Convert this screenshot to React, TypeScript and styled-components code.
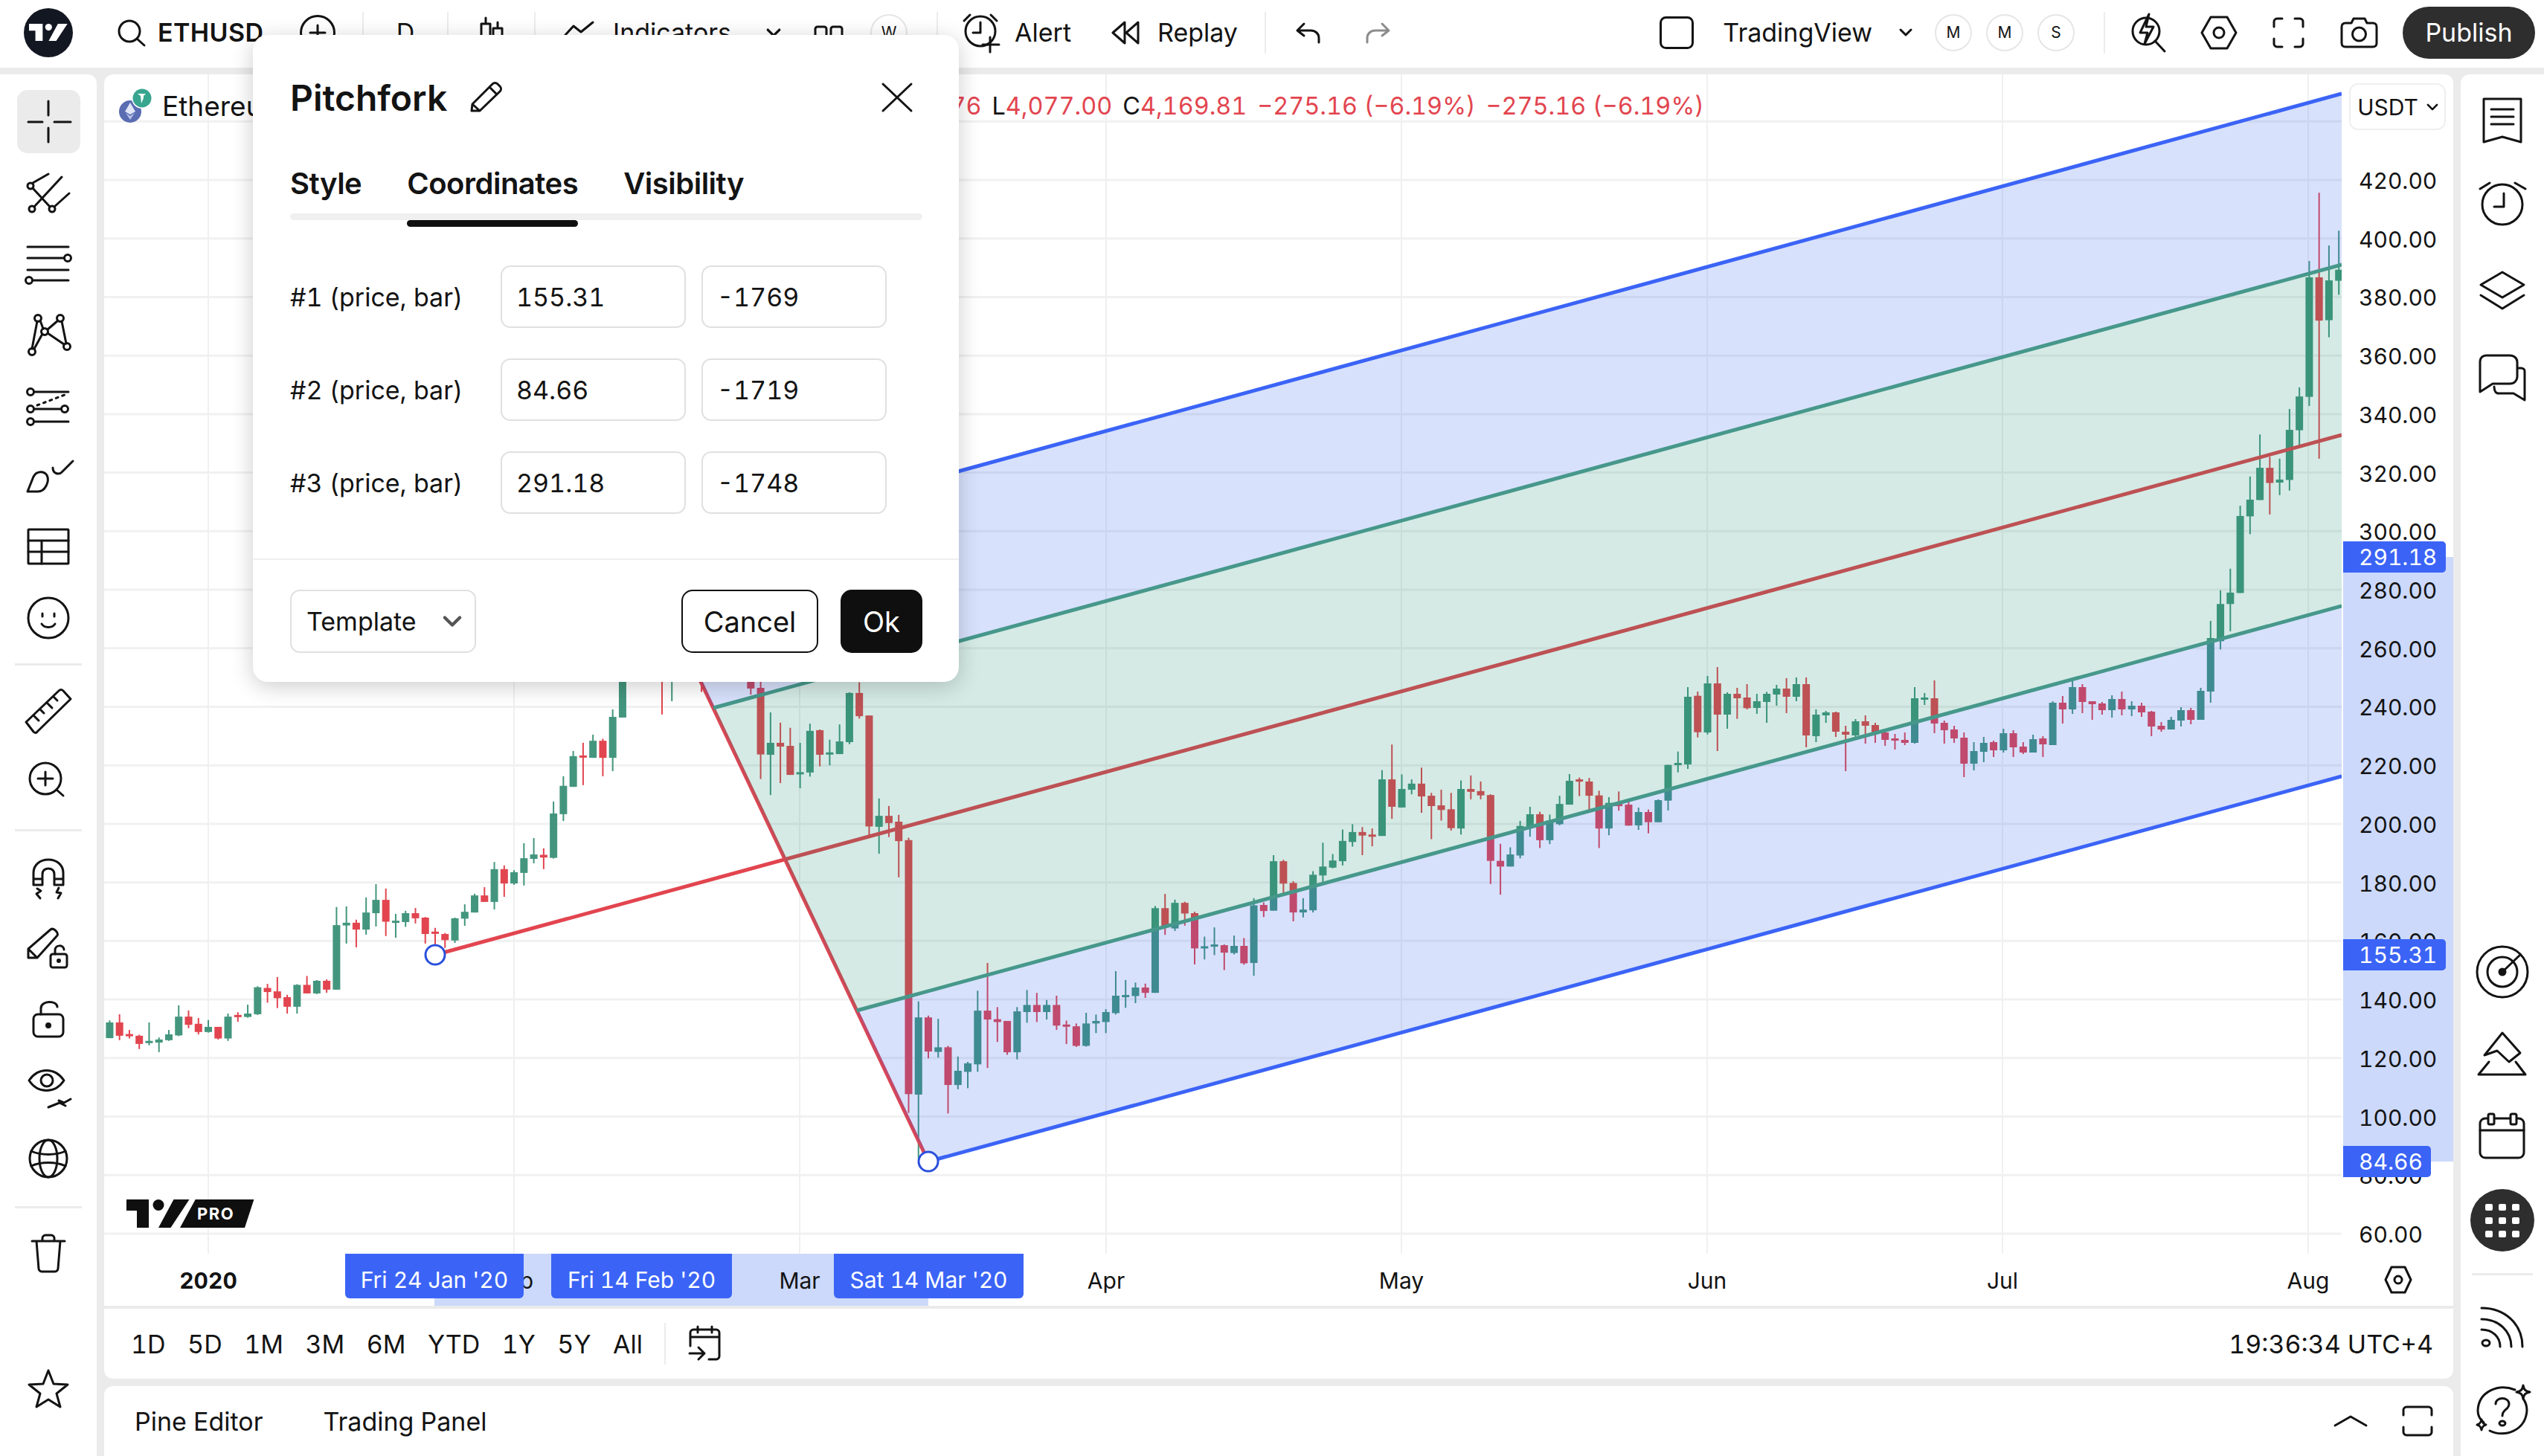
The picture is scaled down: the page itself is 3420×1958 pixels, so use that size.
import * as React from 'react';
import styled, { createGlobalStyle } from 'styled-components';

const GlobalStyle = createGlobalStyle`
  html, body {
    margin: 0;
    padding: 0;
    background: #ebebeb;
    font-family: Inter, "Liberation Sans", sans-serif;
    font-variant-numeric: tabular-nums;
    color: #131313;
  }
  * { box-sizing: border-box; }
`

const Page = styled.div`
  width: 3420px;
  height: 1958px;
  position: relative;
  overflow: hidden;
  display: flex;
  flex-direction: column;
  background: #ebebeb;
`

const Ico = styled.svg`
  display: block;
  flex: none;
  overflow: visible;
  fill: none;
  stroke: ${p => p.color || '#131313'};
  stroke-width: 3;
  stroke-linecap: round;
  stroke-linejoin: round;
`

/* ---------- top bar ---------- */

const TopBar = styled.div`
  height: 91px;
  flex: none;
  background: #fff;
  display: flex;
  align-items: center;
  padding-bottom: 4px;
  margin-bottom: 9px;
  font-size: 34px;
`

const Cell = styled.div<{ $w?: number; $ml?: number }>`
  display: flex;
  align-items: center;
  justify-content: center;
  flex: none;
  height: 64px;
  width: ${p => (p.$w ? p.$w + 'px' : 'auto')};
  margin-left: ${p => p.$ml || 0}px;
`

const TextTool = styled.div<{ $ml?: number; $gap?: number }>`
  display: flex;
  align-items: center;
  flex: none;
  gap: ${p => p.$gap || 18}px;
  margin-left: ${p => p.$ml || 0}px;
  white-space: nowrap;
`

const LogoCircle = styled.div`
  width: 66px;
  height: 66px;
  border-radius: 50%;
  background: #131722;
  display: flex;
  align-items: center;
  justify-content: center;
`

const Symbol = styled.span`
  font-weight: 600;
  letter-spacing: 0.4px;
`

const Sep = styled.div<{ $ml?: number }>`
  width: 2px;
  height: 56px;
  background: #ececec;
  flex: none;
  margin-left: ${p => p.$ml || 0}px;
`

const Pill = styled.div<{ $ml?: number }>`
  width: 50px;
  height: 50px;
  border-radius: 50%;
  border: 2px solid #e6e6e6;
  display: flex;
  align-items: center;
  justify-content: center;
  font-size: 21px;
  flex: none;
  margin-left: ${p => p.$ml || 0}px;
`

const RightTools = styled.div`
  margin-left: auto;
  display: flex;
  align-items: center;
  padding-right: 12px;
`

const Publish = styled.div`
  margin-left: 33px;
  width: 178px;
  height: 70px;
  border-radius: 35px;
  background: #2e2e2e;
  color: #fff;
  display: flex;
  align-items: center;
  justify-content: center;
`

/* ---------- layout ---------- */

const Workspace = styled.div`
  flex: 1;
  display: flex;
  gap: 10px;
  min-height: 0;
`

const LeftBar = styled.div`
  width: 130px;
  flex: none;
  background: #fff;
  border-top-right-radius: 12px;
  display: flex;
  flex-direction: column;
  align-items: center;
  padding-top: 21px;
`

const ToolSlot = styled.div<{ $h?: number; $mt?: number; $active?: boolean }>`
  width: 85px;
  height: ${p => p.$h || 95}px;
  margin-top: ${p => p.$mt || 0}px;
  flex: none;
  display: flex;
  align-items: center;
  justify-content: center;
  border-radius: 14px;
  background: ${p => (p.$active ? '#ebebeb' : 'transparent')};
`

const BarRule = styled.div<{ $mt?: number; $mb?: number; $w?: number }>`
  width: ${p => p.$w || 90}px;
  height: 3px;
  background: #ebebeb;
  flex: none;
  margin-top: ${p => p.$mt || 0}px;
  margin-bottom: ${p => p.$mb || 0}px;
`

const Center = styled.div`
  width: 3158px;
  flex: none;
  display: flex;
  flex-direction: column;
  gap: 10px;
`

const ChartCard = styled.div`
  height: 1754px;
  flex: none;
  background: #fff;
  border-radius: 12px;
  overflow: hidden;
  display: flex;
  flex-direction: column;
`

const PlotRow = styled.div`
  height: 1586px;
  flex: none;
  display: flex;
`

const Plot = styled.div`
  width: 3008px;
  height: 1586px;
  flex: none;
  position: relative;
`

const ChartSvg = styled.svg`
  display: block;
`

const Legend = styled.div`
  position: absolute;
  left: 20px;
  top: 18px;
  height: 48px;
  display: flex;
  align-items: center;
  white-space: nowrap;
  font-size: 32.4px;
`

const LegendTitle = styled.span`
  font-size: 37px;
  margin-left: 12px;
  width: 934px;
  overflow: hidden;
`

const Red = styled.span`
  color: #e2454f;
`

const Ohlc = styled.span`
  margin-right: 14px;
`

const ProBadge = styled.svg`
  position: absolute;
  left: 30px;
  bottom: 35px;
  overflow: visible;
`

const PriceScale = styled.div`
  width: 150px;
  flex: none;
  position: relative;
  font-size: 30px;
`

const ScaleBand = styled.div`
  position: absolute;
  left: 2px;
  right: 0;
  background: #ccd9fb;
`

const Tick = styled.div`
  position: absolute;
  left: 23px;
  margin-top: 1px;
  transform: translateY(-50%);
  line-height: 36px;
`

const PriceFlag = styled.div<{ $w: number }>`
  position: absolute;
  left: 2px;
  width: ${p => p.$w}px;
  height: 42px;
  transform: translateY(-50%);
  background: #3b64f6;
  color: #fff;
  border-radius: 0 5px 5px 0;
  line-height: 42px;
  padding-left: 21px;
`

const CurrencyButton = styled.div`
  position: absolute;
  top: 12px;
  left: 10px;
  width: 130px;
  height: 63px;
  border: 2px solid #efefef;
  border-radius: 12px;
  display: flex;
  align-items: center;
  justify-content: center;
  gap: 12px;
  background: #fff;
`

const TimeAxis = styled.div`
  height: 70px;
  flex: none;
  position: relative;
  font-size: 30px;
`

const TimeBand = styled.div`
  position: absolute;
  left: 444px;
  width: 664px;
  top: 0;
  bottom: 0;
  background: #ccd9fb;
`

const TimeLabel = styled.div<{ $bold?: boolean }>`
  position: absolute;
  top: 36px;
  transform: translate(-50%, -50%);
  font-weight: ${p => (p.$bold ? 700 : 400)};
  white-space: nowrap;
`

const TimeFlag = styled.div`
  position: absolute;
  top: 0;
  height: 60px;
  padding-top: 10px;
  background: #3b64f6;
  color: #fff;
  border-radius: 0 0 6px 6px;
  display: flex;
  align-items: center;
  justify-content: center;
  white-space: nowrap;
`

const HexSlot = styled.div`
  position: absolute;
  left: 3066px;
  top: 16px;
`

const RangeBar = styled.div`
  height: 98px;
  flex: none;
  border-top: 4px solid #ebebeb;
  display: flex;
  align-items: center;
  padding-left: 36px;
  padding-right: 27px;
  gap: 29.5px;
  font-size: 34px;
`

const RangeSep = styled.div`
  width: 2px;
  height: 56px;
  background: #ececec;
`

const Clock = styled.div`
  margin-left: auto;
`

const BottomPanel = styled.div`
  flex: 1;
  background: #fff;
  border-radius: 12px 12px 0 0;
  display: flex;
  align-items: center;
  padding: 0 28px 0 41px;
  font-size: 34px;
  gap: 81px;
`

const PanelIcons = styled.div`
  margin-left: auto;
  display: flex;
  align-items: center;
  gap: 48px;
`

const RightBar = styled.div`
  flex: 1;
  background: #fff;
  border-top-left-radius: 12px;
  display: flex;
  flex-direction: column;
  align-items: center;
  padding-top: 5px;
`

const RightSlot = styled.div<{ $h?: number }>`
  height: ${p => p.$h || 115}px;
  display: flex;
  align-items: center;
  justify-content: center;
  flex: none;
`

const RightBottom = styled.div`
  margin-top: auto;
  display: flex;
  flex-direction: column;
  align-items: center;
  padding-bottom: 5px;
`

const Launcher = styled.div`
  width: 86px;
  height: 84px;
  border-radius: 50%;
  background: #2e2e2e;
  display: grid;
  grid-template-columns: repeat(3, 10px);
  grid-auto-rows: 9px;
  gap: 9px 8px;
  justify-content: center;
  align-content: center;
`

const LauncherDot = styled.span`
  background: #fff;
  border-radius: 2px;
`

/* ---------- dialog ---------- */

const Dialog = styled.div`
  position: absolute;
  left: 340px;
  top: 47px;
  width: 949px;
  height: 870px;
  background: #fff;
  border-radius: 20px;
  box-shadow: 0 6px 30px rgba(0, 0, 0, 0.2);
  padding: 50px 49px 0 50px;
  display: flex;
  flex-direction: column;
`

const DialogHead = styled.div`
  height: 68px;
  display: flex;
  align-items: center;
  flex: none;
  margin-bottom: 2px;
`

const DialogTitle = styled.div`
  font-size: 48px;
  font-weight: 600;
  margin-right: 31px;
`

const CloseSlot = styled.div`
  margin-left: auto;
  margin-right: 14px;
`

const Tabs = styled.div`
  position: relative;
  margin-top: 40px;
  height: 89px;
  display: flex;
  gap: 61px;
  flex: none;
  &::after {
    content: '';
    position: absolute;
    left: 0;
    right: 0;
    bottom: 0;
    height: 9px;
    border-radius: 5px;
    background: #f0f0f0;
  }
`

const Tab = styled.div<{ $active?: boolean }>`
  position: relative;
  z-index: 1;
  font-size: 40px;
  font-weight: 600;
  line-height: 80px;
  letter-spacing: -0.5px;
  white-space: nowrap;
  &::after {
    content: '';
    display: ${p => (p.$active ? 'block' : 'none')};
    position: absolute;
    left: 0;
    right: 0;
    bottom: -9px;
    height: 9px;
    border-radius: 5px;
    background: #0f0f0f;
  }
`

const Form = styled.div`
  margin-top: 61px;
  display: flex;
  flex-direction: column;
  gap: 41px;
  flex: none;
`

const FormRow = styled.div`
  display: flex;
  align-items: center;
  height: 84px;
  font-size: 34px;
`

const RowLabel = styled.div`
  width: 283px;
  flex: none;
`

const Field = styled.div`
  width: 249px;
  height: 84px;
  border: 2px solid #e0e0e0;
  border-radius: 13px;
  display: flex;
  align-items: center;
  padding-left: 19px;
  margin-right: 21px;
  font-size: 34px;
`

const DialogFoot = styled.div`
  margin: 60px -49px 0 -50px;
  border-top: 2px solid #efefef;
  padding: 40px 49px 0 50px;
  display: flex;
  align-items: center;
  flex: none;
`

const TemplateSelect = styled.div`
  width: 250px;
  height: 85px;
  border: 2px solid #e0e0e0;
  border-radius: 13px;
  display: flex;
  align-items: center;
  justify-content: space-between;
  padding: 0 18px 0 20px;
  font-size: 34px;
`

const CancelButton = styled.div`
  margin-left: auto;
  width: 184px;
  height: 85px;
  border: 2px solid #0f0f0f;
  border-radius: 15px;
  display: flex;
  align-items: center;
  justify-content: center;
  font-size: 38px;
`

const OkButton = styled.div`
  margin-left: 30px;
  width: 110px;
  height: 85px;
  background: #0f0f0f;
  color: #fff;
  border-radius: 15px;
  display: flex;
  align-items: center;
  justify-content: center;
  font-size: 38px;
`

/* ---------- chart data ---------- */

const priceY = (p: number) => 242 + (420 - p) * 3.936
const barX = (i: number) => 585 + i * 13.26

// [body top, body bottom, wick top, wick bottom, 1 = up]
type Row = [number, number, number, number, number]
type Bar = { i: number; top: number; bottom: number; hi: number; lo: number; up: boolean }

const frame = (start: number, y0: number, scale: number, rows: Row[]): Bar[] =>
  rows.map((r, k) => ({
    i: start + k,
    top: y0 + r[0] / scale,
    bottom: y0 + r[1] / scale,
    hi: y0 + r[2] / scale,
    lo: y0 + r[3] / scale,
    up: r[4] === 1,
  }))

const bars: Bar[] = [
  ...frame(-33, 880, 2.178, [
    [1078, 1124, 1072, 1124, 1], [1078, 1117, 1054, 1130, 0], [1112, 1116, 1100, 1125, 0], [1117, 1141, 1114, 1156, 0],
    [1132, 1137, 1078, 1145, 1], [1128, 1137, 1122, 1165, 1], [1113, 1130, 1100, 1132, 1], [1061, 1116, 1028, 1118, 1],
    [1061, 1085, 1043, 1095, 0], [1082, 1106, 1065, 1113, 0], [1091, 1106, 1071, 1108, 1], [1091, 1125, 1091, 1128, 0],
    [1061, 1125, 1052, 1132, 1], [1056, 1060, 1048, 1076, 0], [1052, 1062, 1026, 1064, 1], [975, 1054, 972, 1056, 1],
    [977, 989, 965, 1020, 0], [987, 1007, 945, 1036, 0], [1004, 1032, 997, 1052, 0], [968, 1032, 966, 1052, 1],
    [968, 993, 942, 993, 0], [956, 993, 954, 995, 1], [956, 982, 952, 991, 0], [793, 982, 740, 982, 1],
    [786, 794, 738, 847, 1], [786, 806, 777, 858, 0], [756, 806, 712, 821, 1], [719, 758, 673, 797, 1],
    [719, 783, 686, 825, 0], [780, 783, 760, 830, 1], [758, 784, 751, 798, 1], [758, 773, 743, 788, 0],
    [771, 819, 769, 847, 0], [812, 816, 801, 850, 0], [819, 837, 816, 860, 0], [773, 838, 771, 845, 1],
    [754, 774, 732, 795, 1], [706, 756, 701, 756, 1], [706, 725, 682, 725, 0], [629, 725, 608, 747, 1],
    [629, 671, 618, 710, 0], [638, 671, 632, 675, 1], [597, 640, 553, 677, 1], [586, 599, 538, 612, 1],
    [587, 595, 568, 629, 0], [466, 596, 431, 598, 1], [385, 468, 357, 488, 1], [298, 388, 283, 388, 1],
    [296, 300, 259, 383, 0], [253, 303, 235, 303, 1], [253, 303, 247, 357, 0], [183, 303, 161, 342, 1],
    [-100, 185, -100, 185, 1],
  ]),
  ...frame(23, 880, 2.178, [[-200, -100, -200, 176, 0], [-200, -100, -200, 137, 1]]),
  ...frame(27, 880, 2.178, [[-200, -100, -200, 110, 0]]),
  ...frame(32, 880, 2.178, [
    [-100, 100, -100, 118, 0], [98, 293, 50, 365, 0], [259, 294, 170, 412, 1], [259, 270, 200, 377, 0],
    [268, 353, 215, 353, 0], [345, 350, 259, 392, 1], [224, 346, 203, 358, 1], [222, 294, 220, 328, 0],
    [287, 291, 250, 325, 1], [255, 292, 205, 292, 1], [113, 257, 111, 263, 1], [113, 181, 82, 188, 0],
    [179, 504, 179, 530, 0], [473, 505, 422, 584, 1], [473, 494, 444, 535, 0], [490, 547, 470, 653, 0],
    [544, 1288, 537, 1343, 0],
  ]),
  ...frame(49, 850, 2.09, [
    [1083, 1300, 1038, 1480, 1], [1083, 1179, 1078, 1198, 0], [1167, 1180, 1087, 1196, 1], [1167, 1273, 1163, 1353, 0],
    [1233, 1273, 1193, 1285, 1], [1212, 1236, 1208, 1282, 1], [1064, 1215, 1008, 1236, 1], [1064, 1089, 930, 1225, 0],
    [1088, 1096, 1054, 1152, 0], [1093, 1181, 1093, 1188, 0], [1066, 1181, 1054, 1201, 1], [1048, 1068, 1006, 1098, 1],
    [1048, 1068, 1014, 1096, 0], [1048, 1068, 1034, 1089, 1], [1048, 1106, 1022, 1118, 0], [1103, 1106, 1092, 1158, 0],
    [1108, 1163, 1100, 1166, 0], [1100, 1163, 1070, 1165, 1], [1093, 1100, 1075, 1127, 1], [1068, 1096, 1060, 1127, 1],
    [1022, 1071, 953, 1075, 1], [1020, 1024, 978, 1056, 1], [999, 1023, 985, 1043, 1], [999, 1014, 988, 1028, 0],
    [776, 1014, 770, 1014, 1], [776, 830, 736, 851, 0], [761, 833, 752, 840, 1], [761, 791, 758, 825, 0],
    [790, 889, 786, 934, 0], [883, 888, 856, 920, 1], [878, 882, 830, 908, 1], [880, 901, 878, 950, 0],
    [882, 902, 853, 906, 1], [882, 931, 860, 935, 0], [768, 930, 748, 966, 1], [767, 784, 760, 801, 0],
    [644, 783, 627, 783, 1], [644, 707, 640, 738, 0], [705, 788, 700, 813, 0], [780, 788, 748, 802, 1],
    [682, 782, 672, 788, 1], [659, 684, 592, 708, 1], [642, 662, 624, 664, 1], [587, 644, 555, 656, 1],
    [562, 590, 540, 603, 1], [562, 572, 548, 627, 0], [569, 573, 552, 602, 0], [414, 573, 388, 573, 1],
    [414, 491, 316, 525, 0], [441, 493, 400, 493, 1], [426, 443, 414, 456, 1], [426, 462, 381, 508, 0],
    [460, 489, 452, 582, 0], [487, 500, 443, 530, 0], [498, 551, 452, 558, 0], [441, 552, 417, 569, 1],
    [441, 449, 403, 470, 0], [447, 459, 420, 470, 0], [458, 643, 456, 708, 0], [643, 659, 595, 738, 0],
    [625, 659, 605, 659, 1], [545, 628, 531, 636, 1], [512, 547, 491, 575, 1], [512, 585, 505, 607, 0],
    [530, 585, 513, 596, 1], [483, 540, 460, 543, 1], [418, 485, 399, 485, 1], [414, 418, 409, 461, 0],
    [420, 460, 410, 500, 0], [459, 552, 446, 607, 0], [480, 552, 464, 571, 1], [483, 488, 448, 502, 0],
    [485, 544, 470, 544, 0],
  ]),
  ...frame(122, 800, 3, [
    [876, 930, 858, 948, 1], [876, 917, 866, 962, 0], [828, 917, 825, 917, 1], [686, 830, 685, 870, 1],
    [678, 683, 632, 716, 1], [411, 684, 372, 702, 1], [407, 554, 390, 575, 0], [357, 555, 327, 563, 1],
    [357, 483, 291, 630, 0], [399, 483, 393, 540, 1], [399, 417, 375, 500, 0], [414, 457, 360, 462, 0],
    [429, 456, 399, 480, 1], [399, 432, 391, 516, 1], [378, 402, 363, 447, 1], [378, 411, 336, 477, 0],
    [360, 411, 333, 429, 1], [360, 567, 333, 615, 0], [483, 570, 462, 594, 1], [474, 486, 468, 516, 1],
    [474, 552, 471, 573, 0], [552, 564, 528, 711, 0], [510, 567, 501, 573, 1], [510, 528, 486, 600, 0],
    [525, 555, 516, 597, 0], [555, 585, 549, 609, 0], [579, 585, 561, 624, 0], [585, 597, 555, 606, 0],
    [417, 597, 372, 600, 1], [414, 418, 396, 444, 1], [417, 519, 345, 558, 0], [516, 546, 507, 600, 0],
    [543, 579, 528, 597, 0], [576, 681, 555, 735, 0], [630, 681, 594, 708, 1], [597, 633, 573, 675, 1],
    [594, 627, 588, 654, 0], [558, 627, 540, 636, 1], [558, 615, 546, 654, 0], [612, 636, 594, 642, 0],
    [582, 636, 564, 636, 1], [579, 603, 570, 654, 0], [435, 606, 429, 606, 1], [435, 462, 408, 519, 0],
    [372, 462, 345, 480, 1], [372, 432, 360, 477, 0], [429, 441, 429, 504, 0], [438, 465, 432, 483, 0],
    [420, 465, 405, 495, 1], [420, 462, 390, 486, 0], [447, 462, 429, 489, 1], [447, 474, 435, 492, 0],
    [471, 531, 468, 570, 0], [528, 543, 513, 552, 0], [504, 543, 492, 543, 1], [465, 507, 453, 531, 1],
    [465, 504, 456, 522, 0], [387, 504, 375, 504, 1], [174, 390, 105, 435, 1],
  ]),
  ...frame(181, 200, 1.96, [
    [1200, 1298, 1164, 1320, 1], [1170, 1200, 1107, 1272, 1], [968, 1171, 941, 1171, 1], [925, 969, 864, 1016, 1],
    [841, 926, 753, 926, 1], [841, 881, 812, 964, 0], [872, 880, 817, 913, 1], [741, 873, 686, 901, 1],
    [653, 742, 629, 782, 1], [339, 654, 296, 678, 1], [339, 453, 116, 817, 0], [347, 452, 255, 497, 1],
    [319, 348, 216, 385, 1],
  ]),
]

const gridPrices = Array.from({ length: 20 }, (_, k) => 440 - k * 20)
const gridTimes = [280, 691, 1075, 1487, 1884, 2295, 2692, 3103]

const Chart = () => {
  const right = 3148
  const p1 = { x: 585, y: 1284 }
  const p2 = { x: 1248, y: 1562 }
  const p3 = { x: 863, y: 750 }
  const upperMid = { x: 959, y: 952 }
  const lowerMid = { x: 1151.7, y: 1359 }

  return (
    <ChartSvg width={3008} height={1586} viewBox="140 100 3008 1586">
      {gridPrices.map(p => (
        <line key={p} x1={140} x2={right} y1={priceY(p)} y2={priceY(p)} stroke="#f1f1f1" strokeWidth={3} />
      ))}
      {gridTimes.map(x => (
        <line key={x} x1={x} x2={x} y1={100} y2={1686} stroke="#f0f0f0" strokeWidth={2} />
      ))}

      {bars.map(b => {
        const x = barX(b.i)
        const c = b.up ? '#43967d' : '#e2454f'
        return (
          <g key={b.i}>
            <rect x={x - 1} y={b.hi} width={2} height={b.lo - b.hi} fill={c} />
            <rect x={x - 5} y={b.top} width={10} height={Math.max(b.bottom - b.top, 3)} fill={c} />
          </g>
        )
      })}

      <line x1={p1.x} y1={p1.y} x2={right} y2={585} stroke="#e2454f" strokeWidth={5} />
      <line x1={p3.x} y1={p3.y} x2={p2.x} y2={p2.y} stroke="#dc4654" strokeWidth={5} />

      <polygon points={`${p3.x},${p3.y} ${right},126 ${right},356 ${upperMid.x},${upperMid.y}`} fill="rgba(50,95,240,0.19)" />
      <polygon points={`${upperMid.x},${upperMid.y} ${right},356 ${right},815 ${lowerMid.x},${lowerMid.y}`} fill="rgba(20,140,110,0.18)" />
      <polygon points={`${lowerMid.x},${lowerMid.y} ${right},815 ${right},1044 ${p2.x},${p2.y}`} fill="rgba(50,95,240,0.19)" />

      <line x1={p3.x} y1={p3.y} x2={right} y2={126} stroke="#3b64f6" strokeWidth={5} />
      <line x1={p2.x} y1={p2.y} x2={right} y2={1044} stroke="#3b64f6" strokeWidth={5} />
      <line x1={upperMid.x} y1={upperMid.y} x2={right} y2={356} stroke="#46988b" strokeWidth={5} />
      <line x1={lowerMid.x} y1={lowerMid.y} x2={right} y2={815} stroke="#46988b" strokeWidth={5} />

      <circle cx={p1.x} cy={p1.y} r={13} fill="#fff" stroke="#2a50dc" strokeWidth={3} />
      <circle cx={p2.x} cy={p2.y} r={13} fill="#fff" stroke="#2a50dc" strokeWidth={3} />
    </ChartSvg>
  )
}

/* ---------- icons ---------- */

const TvMark = ({ w, color }: { w: number; color: string }) => (
  <svg width={w} height={(w * 38) / 85} viewBox="0 0 85 38" fill={color}>
    <path d="M0 0H30V38H14V15H0Z" />
    <circle cx={43} cy={7.5} r={7.5} />
    <path d="M43 38L63.5 0H84.5L59.5 38Z" />
  </svg>
)

const ChevronDown = ({ w = 16, h = 9, sw = 3, color = '#131313' }: { w?: number; h?: number; sw?: number; color?: string }) => (
  <Ico color={color} width={w} height={h} viewBox="0 0 16 9" style={{ strokeWidth: sw }}>
    <path d="M1 1L8 8L15 1" />
  </Ico>
)

const T = ({ s = 60, children }: { s?: number; children: React.ReactNode }) => (
  <Ico width={s} height={s} viewBox={`0 0 ${s} ${s}`}>{children}</Ico>
)

const leftIcons: Record<string, React.ReactNode> = {
  cross: <path d="M30 8V27M30 44V63M3 36H22M38 36H60" transform="translate(0 -6)" />,
  fork: (
    <>
      <circle cx={8} cy={50} r={4} /><circle cx={35} cy={50} r={4} /><circle cx={6} cy={19} r={4} />
      <path d="M9 22L32 47M11 47L48 7M38 47L58 29M9 15L30 3" />
    </>
  ),
  lines: (
    <>
      <path d="M2 6H57M2 21H51M2 37H57M9 51H57" />
      <circle cx={56} cy={21} r={4.5} /><circle cx={4} cy={51} r={4.5} />
    </>
  ),
  xabcd: (
    <>
      <circle cx={16} cy={7} r={4.5} /><circle cx={46} cy={7} r={4.5} /><circle cx={25} cy={25} r={4.5} />
      <circle cx={8} cy={52} r={4.5} /><circle cx={55} cy={45} r={4.5} />
      <path d="M15 11L8 48M19 10L23 21M43 10L29 22M48 11L54 41M22 28L11 48M29 27L51 42" />
    </>
  ),
  fib: (
    <>
      <circle cx={6} cy={11} r={4.5} /><circle cx={6} cy={34} r={4.5} /><circle cx={52} cy={34} r={4.5} /><circle cx={6} cy={51} r={4.5} />
      <path d="M11 11H57M11 34H47M11 51H57" />
      <path d="M15 29L52 15" strokeDasharray="3 6" />
    </>
  ),
  brush: (
    <path d="M2 50L10 30C14 22 24 22 28 28C32 36 26 50 16 50ZM36 18C36 26 44 28 48 24L63 9" />
  ),
  table: (
    <>
      <rect x={3} y={6} width={54} height={46} rx={1} />
      <path d="M3 21H57M3 36H57M21 21V52" />
    </>
  ),
  smile: (
    <>
      <circle cx={30} cy={30} r={27} />
      <path d="M22 24V28M38 24V28M21 38C25 44 35 44 39 38" />
    </>
  ),
  ruler: (
    <path d="M0 45L44 3C46 1 48 1 50 3L60 14L15 58C14 60 12 60 10 58ZM10 36L17 43M19 28L24 33M28 19L35 26M37 11L42 16" />
  ),
  zoom: (
    <>
      <circle cx={26} cy={30} r={21} />
      <path d="M26 21V39M16 30H36M41 45L50 53" />
    </>
  ),
  magnet: (
    <path d="M10 38V22C10 10 20 4 30 4C40 4 50 10 50 22V38H38V24C38 18 34 16 30 16C26 16 22 18 22 24V38ZM10 30H22M38 30H50M15 43L20 46L14 50L19 56M44 42L41 48L47 49L43 56" />
  ),
  pencilLock: (
    <>
      <path d="M3 32L33 6C37 3 44 10 42 14L15 44H3ZM3 32L15 44" />
      <rect x={33} y={39} width={22} height={18} rx={3} />
      <path d="M39 39V34C39 26 51 26 51 33" />
      <circle cx={44} cy={48} r={1.5} />
    </>
  ),
  lock: (
    <>
      <rect x={10} y={22} width={40} height={30} rx={6} />
      <path d="M20 22V14C20 3 42 3 42 12" />
      <circle cx={30} cy={37} r={2.5} fill="#131313" />
    </>
  ),
  eye: (
    <>
      <path d="M4 26C16 8 39 8 51 26C39 44 16 44 4 26Z" />
      <circle cx={28} cy={26} r={8} />
      <path d="M30 62L45 56L53 60M44 53L51 56L60 51" />
    </>
  ),
  globe: (
    <>
      <circle cx={30} cy={30} r={25} />
      <ellipse cx={30} cy={30} rx={12} ry={25} />
      <path d="M7 20C20 26 40 26 53 20M7 40C20 34 40 34 53 40" />
    </>
  ),
  trash: (
    <path d="M8 13H52M14 13L17 50C17 52 19 54 21 54H39C41 54 43 52 43 50L46 13M22 13V9C22 7 24 5 26 5H34C36 5 38 7 38 9V13" />
  ),
  star: <path d="M30 5L37 23L56 24L41 36L46 54L30 44L14 54L19 36L4 24L23 23Z" />,
}

const rightIcons: Record<string, React.ReactNode> = {
  watch: <path d="M10 6H60V64L35 57L10 64ZM20 20H50M20 30H50M20 40H50" />,
  alarm: (
    <>
      <circle cx={35} cy={35} r={27} />
      <path d="M5 14L18 6M52 6L66 14M37 20V38H24" />
    </>
  ),
  layers: <path d="M35 11L64 28L35 45L6 28ZM6 42L35 60L64 42" />,
  chat: (
    <path d="M5 54V13C5 8 9 5 13 5H45C51 5 55 9 55 14V33C55 39 51 43 45 43H22ZM55 22H60C63 22 65 24 65 26V65L50 56H30C26 56 24 52 24 47" />
  ),
  target: (
    <>
      <circle cx={35} cy={35} r={34} />
      <circle cx={35} cy={35} r={20} />
      <circle cx={35} cy={35} r={4} fill="#131313" />
      <path d="M35 35L59 12" />
    </>
  ),
  ideas: <path d="M11 36L35 6L59 33L44 45L28 30ZM17 45L3 62H66L53 45" />,
  calendar: (
    <>
      <rect x={5} y={10} width={59} height={53} rx={7} />
      <path d="M5 26H64" />
      <rect x={16} y={4} width={8} height={14} rx={2} fill="#fff" />
      <rect x={46} y={4} width={8} height={14} rx={2} fill="#fff" />
    </>
  ),
  signal: (
    <>
      <path d="M7 9C38 9 62 30 62 61M7 24C30 24 47 40 47 61M7 38C22 38 32 48 32 61" />
      <ellipse cx={13} cy={56} rx={5} ry={4} />
    </>
  ),
  help: (
    <>
      <path d="M52 7C30 -2 3 9 2 35C2 42 5 47 10 51M18 62C38 72 66 62 68 35C68 28 66 23 63 19" />
      <path d="M26 26C26 16 44 16 44 26C44 34 35 33 35 42" />
      <ellipse cx={35} cy={52} rx={4} ry={3} />
      <path d="M63 1C64 7 66 9 72 10C66 11 64 13 63 19C62 13 60 11 54 10C60 9 62 7 63 1Z" />
      <path d="M7 47C8 51 9 53 13 54C9 55 8 57 7 61C6 57 5 55 1 54C5 53 6 51 7 47Z" />
    </>
  ),
}

const TopIcon = ({ w, h, children, color }: { w: number; h: number; children: React.ReactNode; color?: string }) => (
  <Ico color={color} width={w} height={h} viewBox={`0 0 ${w} ${h}`}>{children}</Ico>
)

const EthBadge = () => (
  <svg width={46} height={47} viewBox="0 0 46 47">
    <circle cx={15} cy={31} r={15} fill="#5a6cb2" />
    <path d="M15 19L22 31L15 35L8 31Z" fill="#dfe4f6" />
    <path d="M15 37L21 33L15 42L9 33Z" fill="#b9c3ea" />
    <circle cx={31} cy={13} r={14} fill="#fff" />
    <circle cx={31} cy={13} r={12.5} fill="#38a58f" />
    <path d="M25 7H36L33 10V13L30 20L29 10Z" fill="#fff" />
  </svg>
)

const PricePoint = ({ p, w, label }: { p: number; w: number; label: string }) => (
  <PriceFlag $w={w} style={{ top: priceY(p) - 100 }}>{label}</PriceFlag>
)

const App = () => {
  const ticks = ['420.00', '400.00', '380.00', '360.00', '340.00', '320.00', '300.00', '280.00', '260.00', '240.00', '220.00', '200.00', '180.00', '160.00', '140.00', '120.00', '100.00', '80.00', '60.00']
  const months: [string, number, boolean?][] = [
    ['2020', 280, true], ['Feb', 691], ['Mar', 1075], ['Apr', 1487], ['May', 1884], ['Jun', 2295], ['Jul', 2692], ['Aug', 3103],
  ]
  const rangeItems = ['1D', '5D', '1M', '3M', '6M', 'YTD', '1Y', '5Y', 'All']

  return (
    <Page>
      <GlobalStyle />

      <TopBar>
        <Cell $w={130}><LogoCircle><TvMark w={52} color="#fff" /></LogoCircle></Cell>
        <TextTool $ml={28} $gap={16} style={{ width: 234 }}>
          <TopIcon w={38} h={36}><circle cx={16} cy={16} r={14} /><path d="M26 26L36 35" /></TopIcon>
          <Symbol>ETHUSD</Symbol>
        </TextTool>
        <Cell $w={70}>
          <TopIcon w={48} h={48}><circle cx={24} cy={24} r={22.5} /><path d="M24 14V34M14 24H34" /></TopIcon>
        </Cell>
        <Sep $ml={25} />
        <Cell $w={112}>D</Cell>
        <Sep />
        <Cell $w={115}>
          <TopIcon w={34} h={40}><path d="M9 0V8M3 8H15V28H3ZM9 28V34M25 6V14M19 14H31V26H19Z" /></TopIcon>
        </Cell>
        <Sep />
        <TextTool $ml={39} $gap={23}>
          <TopIcon w={42} h={30}><path d="M1 18L12 6L22 14L38 1M30 20H40V30H30Z" /></TopIcon>
          <span>Indicators</span>
        </TextTool>
        <Cell $ml={48}><ChevronDown w={18} h={10} /></Cell>
        <Cell $ml={20} $w={90}>
          <TopIcon w={38} h={18}><rect x={1} y={1} width={15} height={16} rx={3} /><rect x={22} y={1} width={15} height={16} rx={3} /></TopIcon>
        </Cell>
        <Cell $w={72}><Pill>W</Pill></Cell>
        <Sep $ml={28} />
        <TextTool $ml={32} $gap={18}>
          <TopIcon w={53} h={52}>
            <circle cx={25} cy={24} r={20} />
            <path d="M3 10L11 2M47 10L39 2M25 12V26H15M38 32V52M28 42H50" />
          </TopIcon>
          <span>Alert</span>
        </TextTool>
        <TextTool $ml={54} $gap={24}>
          <TopIcon w={38} h={30}><path d="M18 1L2 15L18 29ZM36 1L20 15L36 29Z" /></TopIcon>
          <span>Replay</span>
        </TextTool>
        <Sep $ml={36} />
        <Cell $ml={40}>
          <TopIcon w={33} h={26}><path d="M11 1L2 10L11 17M2 10H20C26 10 31 14 31 20V26" /></TopIcon>
        </Cell>
        <Cell $ml={61}>
          <TopIcon w={33} h={26} color="#8c8c8c"><path d="M22 1L31 10L22 17M31 10H13C7 10 2 14 2 20V26" /></TopIcon>
        </Cell>
        <RightTools>
          <TopIcon w={46} h={44}><rect x={1.5} y={1.5} width={43} height={41} rx={7} /></TopIcon>
          <TextTool $ml={39}>TradingView</TextTool>
          <Cell $ml={37}><ChevronDown w={16} h={9} /></Cell>
          <Pill $ml={31}>M</Pill>
          <Pill $ml={19}>M</Pill>
          <Pill $ml={19}>S</Pill>
          <Sep $ml={39} />
          <Cell $ml={35}>
            <TopIcon w={46} h={52}>
              <circle cx={20} cy={24} r={18} />
              <path d="M32 37L45 51" />
              <path d="M24 1L12 26H22L18 41L30 18H20Z" fill="#fff" />
            </TopIcon>
          </Cell>
          <Cell $ml={48}>
            <TopIcon w={48} h={46}>
              <path d="M13 2H35L47 23L35 44H13L1 23Z" />
              <circle cx={24} cy={23} r={7} />
            </TopIcon>
          </Cell>
          <Cell $ml={49}>
            <TopIcon w={41} h={40}><path d="M1 12V5C1 3 3 1 5 1H12M29 1H36C38 1 40 3 40 5V12M40 28V35C40 37 38 39 36 39H29M12 39H5C3 39 1 37 1 35V28" /></TopIcon>
          </Cell>
          <Cell $ml={49}>
            <TopIcon w={51} h={42}>
              <path d="M2 13C2 10 4 8 7 8H15L18 2H33L36 8H44C47 8 49 10 49 13V35C49 38 47 40 44 40H7C4 40 2 38 2 35Z" />
              <circle cx={25.5} cy={23} r={9} />
            </TopIcon>
          </Cell>
          <Publish>Publish</Publish>
        </RightTools>
      </TopBar>

      <Workspace>
        <LeftBar>
          <ToolSlot $active $h={85}><T>{leftIcons.cross}</T></ToolSlot>
          <ToolSlot $mt={7}><T>{leftIcons.fork}</T></ToolSlot>
          <ToolSlot><T>{leftIcons.lines}</T></ToolSlot>
          <ToolSlot><T>{leftIcons.xabcd}</T></ToolSlot>
          <ToolSlot><T>{leftIcons.fib}</T></ToolSlot>
          <ToolSlot><T>{leftIcons.brush}</T></ToolSlot>
          <ToolSlot><T>{leftIcons.table}</T></ToolSlot>
          <ToolSlot><T>{leftIcons.smile}</T></ToolSlot>
          <BarRule $mt={14} $mb={14} />
          <ToolSlot $h={94}><T>{leftIcons.ruler}</T></ToolSlot>
          <ToolSlot $h={88}><T>{leftIcons.zoom}</T></ToolSlot>
          <BarRule $mt={24} $mb={17} />
          <ToolSlot $h={94}><T>{leftIcons.magnet}</T></ToolSlot>
          <ToolSlot $h={90}><T>{leftIcons.pencilLock}</T></ToolSlot>
          <ToolSlot $h={90} $mt={8}><T>{leftIcons.lock}</T></ToolSlot>
          <ToolSlot $h={80}><T>{leftIcons.eye}</T></ToolSlot>
          <ToolSlot $h={96} $mt={13}><T>{leftIcons.globe}</T></ToolSlot>
          <BarRule $mt={16} $mb={14} />
          <ToolSlot $h={94}><T>{leftIcons.trash}</T></ToolSlot>
          <ToolSlot $h={94} $mt={88}><T>{leftIcons.star}</T></ToolSlot>
        </LeftBar>

        <Center>
          <ChartCard>
            <PlotRow>
              <Plot>
                <Chart />
                <Legend>
                  <EthBadge />
                  <LegendTitle>Ethereum / TetherUS · 1D · Binance</LegendTitle>
                  <Ohlc>H<Red>4,450.76</Red></Ohlc>
                  <Ohlc>L<Red>4,077.00</Red></Ohlc>
                  <Ohlc>C<Red>4,169.81</Red></Ohlc>
                  <Ohlc><Red>−275.16 (−6.19%)</Red></Ohlc>
                  <Ohlc><Red>−275.16 (−6.19%)</Red></Ohlc>
                </Legend>
                <ProBadge width={171} height={38} viewBox="0 0 171 38">
                  <path d="M0 0H30V38H14V15H0Z" fill="#0f0f0f" />
                  <circle cx={43} cy={7.5} r={7.5} fill="#0f0f0f" />
                  <path d="M43 38L63.5 0H84.5L59.5 38Z" fill="#0f0f0f" />
                  <path d="M92.7 0H171.4L159 38H72Z" fill="#0f0f0f" />
                  <text x={120} y={26.5} fontFamily="Inter, sans-serif" fontWeight={700} fontSize={22} letterSpacing={1.5} textAnchor="middle" fill="#fff">PRO</text>
                </ProBadge>
              </Plot>
              <PriceScale>
                <ScaleBand style={{ top: priceY(291.18) - 100, height: priceY(84.66) - priceY(291.18) }} />
                {ticks.map(t => (
                  <Tick key={t} style={{ top: priceY(parseFloat(t)) - 100 }}>{t}</Tick>
                ))}
                <PricePoint p={291.18} w={138} label="291.18" />
                <PricePoint p={155.31} w={138} label="155.31" />
                <PricePoint p={84.66} w={118} label="84.66" />
                <CurrencyButton>USDT <ChevronDown w={14} h={8} /></CurrencyButton>
              </PriceScale>
            </PlotRow>

            <TimeAxis>
              <TimeBand />
              {months.map(([label, x, bold]) => (
                <TimeLabel key={label} $bold={bold} style={{ left: x - 140 }}>{label}</TimeLabel>
              ))}
              <TimeFlag style={{ left: 324, width: 240 }}>Fri 24 Jan '20</TimeFlag>
              <TimeFlag style={{ left: 601, width: 243 }}>Fri 14 Feb '20</TimeFlag>
              <TimeFlag style={{ left: 981, width: 255 }}>Sat 14 Mar '20</TimeFlag>
              <HexSlot>
                <TopIcon w={36} h={38}><path d="M9 2H27L35 19L27 36H9L1 19Z" /><circle cx={18} cy={19} r={5} /></TopIcon>
              </HexSlot>
            </TimeAxis>

            <RangeBar>
              {rangeItems.map(r => <span key={r}>{r}</span>)}
              <RangeSep />
              <TopIcon w={46} h={46} >
                <path d="M3 26V8C3 6 5 4 7 4H38C40 4 42 6 42 8V40C42 42 40 44 38 44H28M3 14H42M13 0V8M32 0V8M2 36H22M14 28L22 36L14 44" />
              </TopIcon>
              <Clock>19:36:34 UTC+4</Clock>
            </RangeBar>
          </ChartCard>

          <BottomPanel>
            <span>Pine Editor</span>
            <span>Trading Panel</span>
            <PanelIcons>
              <TopIcon w={44} h={14}><path d="M1 13L22 1L43 13" /></TopIcon>
              <TopIcon w={40} h={40}><path d="M1 12V5C1 3 3 1 5 1H35C37 1 39 3 39 5V12M39 28V35C39 37 37 39 35 39H5C3 39 1 37 1 35V28" /></TopIcon>
            </PanelIcons>
          </BottomPanel>
        </Center>

        <RightBar>
          <RightSlot $h={113}><T s={70}>{rightIcons.watch}</T></RightSlot>
          <RightSlot $h={114}><T s={70}>{rightIcons.alarm}</T></RightSlot>
          <RightSlot $h={116}><T s={70}>{rightIcons.layers}</T></RightSlot>
          <RightSlot $h={120}><T s={70}>{rightIcons.chat}</T></RightSlot>
          <RightBottom>
            <RightSlot $h={111}><T s={70}>{rightIcons.target}</T></RightSlot>
            <RightSlot $h={111}><T s={70}>{rightIcons.ideas}</T></RightSlot>
            <RightSlot $h={112}><T s={70}>{rightIcons.calendar}</T></RightSlot>
            <RightSlot $h={112}>
              <Launcher>{Array.from({ length: 9 }, (_, k) => <LauncherDot key={k} />)}</Launcher>
            </RightSlot>
            <BarRule $w={82} $mt={15} $mb={14} />
            <RightSlot $h={112}><T s={70}>{rightIcons.signal}</T></RightSlot>
            <RightSlot $h={112}><T s={70}>{rightIcons.help}</T></RightSlot>
          </RightBottom>
        </RightBar>
      </Workspace>

      <Dialog>
        <DialogHead>
          <DialogTitle>Pitchfork</DialogTitle>
          <TopIcon w={42} h={40}><path d="M2 38L3 29L30 2C32 0 35 0 37 2L40 5C42 7 42 10 40 12L13 38ZM26 6L36 16M3 29L13 38" /></TopIcon>
          <CloseSlot>
            <TopIcon w={40} h={38}><path d="M1 1L39 37M39 1L1 37" /></TopIcon>
          </CloseSlot>
        </DialogHead>
        <Tabs>
          <Tab>Style</Tab>
          <Tab $active>Coordinates</Tab>
          <Tab>Visibility</Tab>
        </Tabs>
        <Form>
          <FormRow><RowLabel>#1 (price, bar)</RowLabel><Field>155.31</Field><Field>-1769</Field></FormRow>
          <FormRow><RowLabel>#2 (price, bar)</RowLabel><Field>84.66</Field><Field>-1719</Field></FormRow>
          <FormRow><RowLabel>#3 (price, bar)</RowLabel><Field>291.18</Field><Field>-1748</Field></FormRow>
        </Form>
        <DialogFoot>
          <TemplateSelect>Template <ChevronDown w={24} h={13} color="#555" /></TemplateSelect>
          <CancelButton>Cancel</CancelButton>
          <OkButton>Ok</OkButton>
        </DialogFoot>
      </Dialog>
    </Page>
  );
}

export default App;
